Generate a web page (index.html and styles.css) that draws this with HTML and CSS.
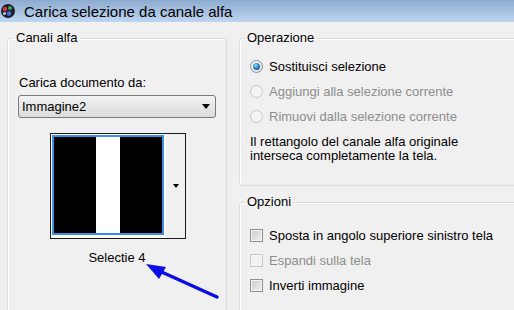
FILE: index.html
```html
<!DOCTYPE html>
<html lang="it">
<head>
    <meta charset="UTF-8">
    <title>Carica selezione da canale alfa</title>
    <link rel="stylesheet" href="styles.css">
</head>
<body>
    <div class="titlebar">
        <svg class="app-icon" width="16" height="16" viewBox="0 0 16 16">
            <circle cx="8" cy="8" r="7" fill="#1b1f2e"/>
            <circle cx="5" cy="6" r="2.2" fill="#d8343a"/>
            <circle cx="10" cy="5" r="2" fill="#3aa84a"/>
            <circle cx="9" cy="10.5" r="2.2" fill="#3b78e0"/>
            <circle cx="4.5" cy="10.5" r="1.5" fill="#c9c9d6"/>
        </svg>
        <span class="title">Carica selezione da canale alfa</span>
    </div>

    <div class="dialog">
        <fieldset class="group group-channels">
            <legend>Canali alfa</legend>
            <div class="field-label">Carica documento da:</div>
            <div class="combo">
                <span>Immagine2</span>
                <span class="arrow-down"></span>
            </div>
            <div class="preview">
                <div class="preview-frame">
                    <div class="preview-image"><div class="stripe"></div></div>
                </div>
                <div class="preview-button"><span class="arrow-down small"></span></div>
            </div>
            <div class="preview-name">Selectie 4</div>
        </fieldset>

        <div class="right-col">
            <fieldset class="group group-op">
                <legend>Operazione</legend>
                <div class="option"><span class="radio checked"></span>Sostituisci selezione</div>
                <div class="option disabled"><span class="radio"></span>Aggiungi alla selezione corrente</div>
                <div class="option disabled"><span class="radio"></span>Rimuovi dalla selezione corrente</div>
                <p class="op-note">Il rettangolo del canale alfa originale<br>interseca completamente la tela.</p>
            </fieldset>

            <fieldset class="group group-opt">
                <legend>Opzioni</legend>
                <div class="option"><span class="check"></span>Sposta in angolo superiore sinistro tela</div>
                <div class="option disabled"><span class="check"></span>Espandi sulla tela</div>
                <div class="option"><span class="check"></span>Inverti immagine</div>
            </fieldset>
        </div>
    </div>

    <!-- freccia di annotazione sopra il dialogo -->
    <svg class="pointer" width="514" height="310" viewBox="0 0 514 310">
        <line x1="217" y1="297" x2="155" y2="269" stroke="#0c0ce4" stroke-width="3.5" stroke-linecap="round"/>
        <polygon points="146,264 166,267 159,279" fill="#0c0ce4"/>
    </svg>
</body>
</html>
```

FILE: styles.css
```css
html, body {
    margin: 0;
    width: 514px;
    height: 310px;
    overflow: hidden;
}

body {
    font-family: "Liberation Sans", Arial, sans-serif;
    font-size: 13px;
    background-color: #f0f0f0;
    color: #000;
    position: relative;
}

.titlebar {
    height: 22px;
    display: flex;
    align-items: center;
    background: linear-gradient(#8eabd0, #bdd5ee);
}

.app-icon {
    margin-right: 8px;
}

.title {
    font-size: 15px;
    color: #000;
    padding-top: 1px;
}

.dialog {
    display: flex;
    align-items: flex-start;
    padding-left: 7px;
    height: 288px;
    overflow: hidden;
}

/* group box */
.group {
    box-sizing: border-box;
    margin: 9px 0 0 0;
    border: 1px solid #d5dfe5;
    border-radius: 3px;
    box-shadow: inset 1px 1px 0 #fff;
    padding: 0 10px;
    min-inline-size: 0;
}

.group legend {
    font-size: 13px;
    line-height: 14px;
    padding: 0 2px;
    color: #000;
}

.group-channels {
    flex: none;
    width: 220px;
    height: 300px;
    padding-top: 30px;
}

.group-channels legend {
    margin-left: -4px;
}

.field-label {
    line-height: 15px;
    padding-left: 1px;
}

.combo {
    margin-top: 5px;
    height: 23px;
    box-sizing: border-box;
    border: 1px solid #7a7a7a;
    border-radius: 3px;
    background: linear-gradient(#f4f4f4, #e6e6e6 50%, #dcdcdc);
    display: flex;
    align-items: center;
    justify-content: space-between;
    padding: 0 5px 0 3px;
}

.arrow-down {
    width: 0;
    height: 0;
    border-left: 4px solid transparent;
    border-right: 4px solid transparent;
    border-top: 5px solid #000;
}

.arrow-down.small {
    border-left-width: 3px;
    border-right-width: 3px;
    border-top-width: 4px;
}

.preview {
    margin: 15px 0 0 32px;
    width: 134px;
    height: 104px;
    border: 1px solid #1a1a1a;
    display: flex;
    background-color: #fff;
}

.preview-frame {
    padding: 1px;
    background-color: #fff;
}

.preview-image {
    width: 108px;
    height: 96px;
    border: 2px solid #3c8fe6;
    background-color: #000;
    position: relative;
}

.stripe {
    position: absolute;
    left: 42px;
    top: 0;
    width: 24px;
    height: 100%;
    background-color: #fff;
}

.preview-button {
    flex: 1;
    border-left: 1px solid #fff;
    background-color: #f0f0f0;
    display: flex;
    align-items: center;
    justify-content: center;
}

.preview-name {
    margin-top: 11px;
    line-height: 15px;
    text-align: center;
}

.right-col {
    flex: none;
    margin-left: 12px;
    width: 300px;
}

.group-op {
    padding-top: 9px;
    padding-bottom: 22px;
}

.group-op legend,
.group-opt legend {
    margin-left: -5px;
}

.option {
    height: 25px;
    display: flex;
    align-items: center;
    white-space: nowrap;
}

.option.disabled {
    color: #8d8d8d;
}

.radio {
    width: 11px;
    height: 11px;
    border: 1px solid #8a8f96;
    border-radius: 50%;
    background: radial-gradient(circle at 40% 35%, #fff, #e4e4e4 70%, #cfcfcf);
    margin-right: 6px;
    position: relative;
}

.radio.checked::after {
    content: "";
    position: absolute;
    left: 2px;
    top: 2px;
    width: 7px;
    height: 7px;
    border-radius: 50%;
    background: radial-gradient(circle at 40% 35%, #8fd6ff, #1e6fb8 60%, #0c3b6d);
}

.disabled .radio {
    border-color: #c4c7ca;
    background: #f4f4f4;
}

.op-note {
    margin: 6px 0 0 0;
    line-height: 14px;
}

.group-opt {
    margin-top: 9px;
    height: 120px;
    padding-top: 14px;
}

.check {
    width: 11px;
    height: 11px;
    border: 1px solid #8e8f8f;
    box-shadow: inset 0 0 0 1px #f4f4f4;
    background: linear-gradient(135deg, #cbcbcb, #f2f2f2);
    margin-right: 6px;
}

.disabled .check {
    border-color: #c7c7c7;
    background: #f2f2f2;
}

.pointer {
    position: absolute;
    left: 0;
    top: 0;
    pointer-events: none;
}
```
